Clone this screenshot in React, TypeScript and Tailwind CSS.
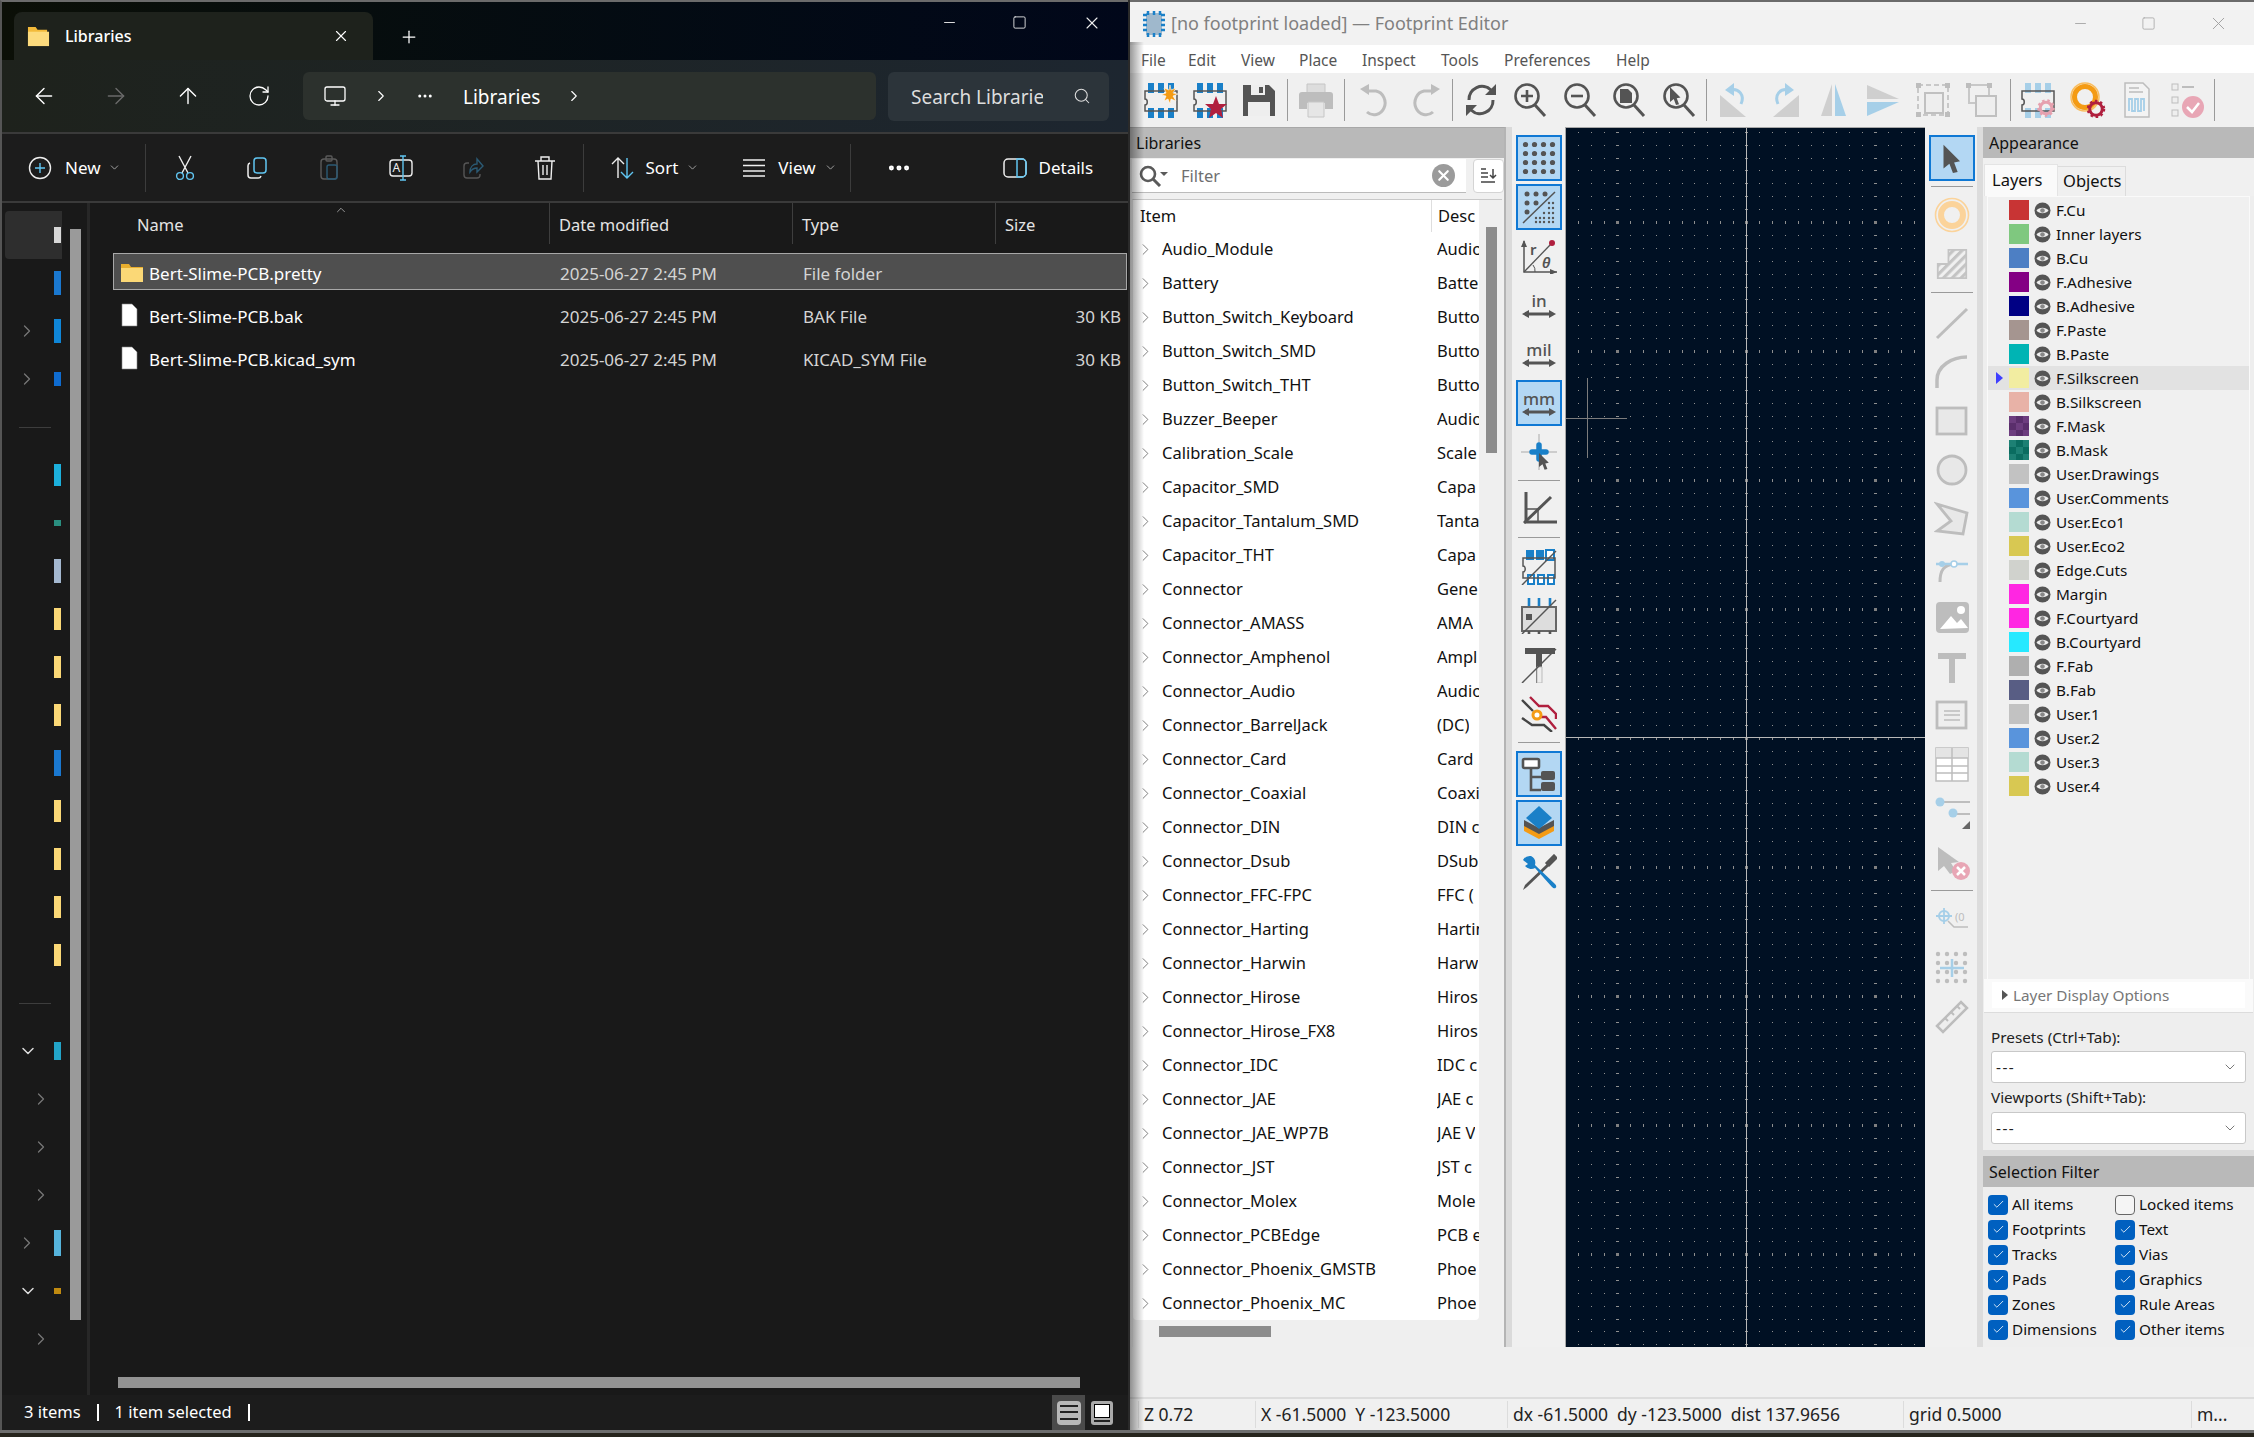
import React from "react";
import { ArrowLeft, ArrowRight, ArrowUp, RotateCw, Monitor, ChevronRight, ChevronDown, ChevronUp, Ellipsis, Search, X, Plus, Minus, Square, Check } from "lucide-react";

type P = { children?: React.ReactNode; s?: number };
const S = ({ children, s = 36 }: P) => (
  <svg width={s} height={s} viewBox="0 0 36 36" className="block shrink-0">{children}</svg>
);
const F = "Noto Sans, sans-serif";

/* ---------- Explorer ---------- */
const Folder = () => (
  <svg width="24" height="22" viewBox="0 0 24 22" className="block shrink-0">
    <path d="M1 3h8l2 3h12v14H1z" fill="#e9ae2e" />
    <path d="M1 7h22v14H1z" fill="#fbd876" />
  </svg>
);
const FileI = () => (
  <svg width="24" height="24" viewBox="0 0 24 24" className="block shrink-0 -ml-[3px]">
    <path d="M5 1h10l5 5v17H5z" fill="#fff" stroke="#888" strokeWidth="0.6" />
  </svg>
);
const B = "#60c5f1";
const CmdNew = () => (
  <svg width="24" height="24" viewBox="0 0 24 24" fill="none" strokeWidth="1.4"><circle cx="12" cy="12" r="10.5" stroke="#eee" /><path d="M12 7v10M7 12h10" stroke={B} /></svg>
);
const CmdCut = () => (
  <svg width="24" height="26" viewBox="0 0 24 26" fill="none" strokeWidth="1.4"><path d="M6 1l9 17M18 1L9 18" stroke="#eee" /><circle cx="7" cy="21" r="3.4" stroke={B} /><circle cx="17" cy="21" r="3.4" stroke={B} /></svg>
);
const CmdCopy = () => (
  <svg width="24" height="24" viewBox="0 0 24 24" fill="none" strokeWidth="1.5"><rect x="9" y="2" width="12" height="15" rx="3" stroke={B} /><path d="M5 7a3 3 0 0 0-2 3v9a3 3 0 0 0 3 3h7a3 3 0 0 0 3-2" stroke="#eee" /></svg>
);
const CmdPaste = () => (
  <svg width="24" height="26" viewBox="0 0 24 26" fill="none" strokeWidth="1.4"><rect x="4" y="4" width="16" height="20" rx="3" stroke="#5a5a5a" /><rect x="9" y="1" width="6" height="5" rx="1" stroke="#5a5a5a" /><rect x="10" y="10" width="10" height="14" rx="2" stroke="#2b5a74" /></svg>
);
const CmdRename = () => (
  <svg width="26" height="26" viewBox="0 0 26 26" fill="none" strokeWidth="1.4"><rect x="2" y="5" width="22" height="16" rx="3" stroke="#eee" /><path d="M15 1v24M12 1h6M12 25h6" stroke={B} /><text x="4.5" y="17" fontSize="12" fill="#eee" stroke="none" fontFamily={F}>A</text></svg>
);
const CmdShare = () => (
  <svg width="24" height="24" viewBox="0 0 24 24" fill="none" strokeWidth="1.4"><path d="M8 7H6a3 3 0 0 0-3 3v9a3 3 0 0 0 3 3h10a3 3 0 0 0 3-3v-1" stroke="#555" /><path d="M9 16c0-5 3-8 7-8V3l6 7-6 6v-4c-3 0-5 1-7 4z" stroke="#2b5a74" /></svg>
);
const CmdDel = () => (
  <svg width="24" height="26" viewBox="0 0 24 26" fill="none" stroke="#eee" strokeWidth="1.4"><path d="M2 6h20M8 6V2h8v4M5 6l1 18h12l1-18M10 10v10M14 10v10" /></svg>
);
const CmdSort = () => (
  <svg width="26" height="24" viewBox="0 0 26 24" fill="none" strokeWidth="1.4"><path d="M8 22V2M2 8l6-6 6 6" stroke="#eee" /><path d="M17 2v20M11 16l6 6 6-6" stroke={B} /></svg>
);
const CmdView = () => (
  <svg width="24" height="20" viewBox="0 0 24 20" fill="none" stroke="#eee" strokeWidth="1.5"><path d="M1 2h22M1 7.500h22M1 13h22M1 18h22" /></svg>
);
const CmdDetails = () => (
  <svg width="24" height="22" viewBox="0 0 24 22" fill="none" strokeWidth="1.5"><rect x="1" y="2" width="22" height="18" rx="4" stroke="#eee" /><path d="M14 2v18h5a4 4 0 0 0 4-4V6a4 4 0 0 0-4-4z" stroke={B} /></svg>
);

const CmdCell = ({ children, w }: { children: React.ReactNode; w: string }) => (
  <div className={`${w} h-full flex items-center justify-center shrink-0`}>{children}</div>
);
const CmdSep = () => <div className="w-px h-[48px] bg-[#3c3c3c] shrink-0" />;

type Nav = { ch?: "r" | "d"; lvl?: number; c?: string; h?: number; sep?: boolean; sel?: boolean };
const nav: Nav[] = [
  { c: "#d8d8d8", h: 16, sel: true }, { c: "#1a78d0", h: 24 }, { ch: "r", lvl: 1, c: "#0f86d8", h: 24 }, { ch: "r", lvl: 1, c: "#0f6cd0", h: 14 }, { sep: true },
  { c: "#1cb0dc", h: 22 }, { c: "#2a8f80", h: 6 }, { c: "#a4b8d0", h: 24 }, { c: "#fbd876", h: 22 }, { c: "#fbd876", h: 22 }, { c: "#fbd876", h: 22 }, { c: "#1a78d0", h: 26 }, { c: "#fbd876", h: 22 }, { c: "#fbd876", h: 22 }, { c: "#fbd876", h: 22 }, { c: "#fbd876", h: 22 }, { sep: true },
  { ch: "d", lvl: 1, c: "#22a4c8", h: 18 }, { ch: "r", lvl: 2 }, { ch: "r", lvl: 2 }, { ch: "r", lvl: 2 }, { ch: "r", lvl: 1, c: "#56b4dc", h: 26 }, { ch: "d", lvl: 1, c: "#c08a10", h: 6 }, { ch: "r", lvl: 2 },
];

function Sidebar() {
  return (
    <div className="w-[88px] shrink-0 flex border-r-[3px] border-[#272727] overflow-hidden">
      <div className="w-[60px] shrink-0 pt-[8px] pl-[3px]">
        {nav.map((n, i) =>
          n.sep ? (
            <div key={i} className="h-[48px] flex items-center pl-[14px]"><div className="w-[32px] h-px bg-[#3d3d3d]" /></div>
          ) : (
            <div key={i} className={`h-[48px] relative flex items-center justify-end ${n.sel ? "bg-[#2e2e2e] rounded-l-[4px]" : ""}`}>
              {n.ch === "r" && <ChevronRight size={20} strokeWidth={1.5} color="#777" className={`absolute top-[14px] ${n.lvl === 1 ? "left-[12px]" : "left-[26px]"}`} />}
              {n.ch === "d" && <ChevronDown size={20} strokeWidth={1.8} color="#ddd" className="absolute top-[14px] left-[13px]" />}
              {n.c && <div className="w-[7px] -translate-x-[1px]" style={{ height: n.h, background: n.c }} />}
            </div>
          )
        )}
      </div>
      <div className="w-[11px] ml-[8px] mt-[26px] h-[1091px] bg-[#9a9a9a] shrink-0" />
    </div>
  );
}

const files = [
  { n: "Bert-Slime-PCB.pretty", t: "File folder", s: "", d: true },
  { n: "Bert-Slime-PCB.bak", t: "BAK File", s: "30 KB" },
  { n: "Bert-Slime-PCB.kicad_sym", t: "KICAD_SYM File", s: "30 KB" },
];

function Explorer() {
  return (
    <div className="w-[1128px] shrink-0 h-full flex flex-col bg-[#191919] text-white border-l-2 border-t-2 border-l-[#555] border-t-[#6b6b6b] text-[17px]">
      <div className="h-[58px] shrink-0 flex bg-gradient-to-r from-[#0b0f07] to-[#01071a]">
        <div className="ml-[12px] mt-[10px] w-[359px] h-[48px] rounded-t-[8px] bg-[#1e221c] flex items-center pl-[13px] pr-[23px]">
          <svg width="23" height="23" viewBox="0 0 24 22" className="shrink-0"><path d="M1 1h8l2 3h10v17H1z" fill="#f3ba3a" /><path d="M1 6h22v15H1z" fill="#fcdb7d" /></svg>
          <span className="ml-[15px] text-[16px] font-medium flex-1">Libraries</span>
          <X size={18} strokeWidth={1.5} />
        </div>
        <Plus size={20} strokeWidth={1.5} className="ml-[26px] mt-[25px]" />
        <div className="ml-auto flex items-start mt-[11px] text-[#eee]">
          <Minus size={17} strokeWidth={1.3} className="mr-[54px] mt-[1px]" />
          <Square size={15} strokeWidth={1.4} className="mr-[55px] mt-[2px]" />
          <X size={20} strokeWidth={1.3} />
          <div className="w-[26px]" />
        </div>
      </div>
      <div className="h-[72px] shrink-0 flex items-center bg-gradient-to-r from-[#1e221c] to-[#1d2630] pl-[29px] text-[19px]">
        <ArrowLeft size={26} strokeWidth={1.3} className="mr-[46px]" />
        <ArrowRight size={26} strokeWidth={1.3} color="#6a6a6a" className="mr-[46px]" />
        <ArrowUp size={26} strokeWidth={1.3} className="mr-[46px]" />
        <RotateCw size={24} strokeWidth={1.3} className="mr-[32px]" />
        <div className="w-[573px] h-[48px] rounded-[6px] bg-[#2c312d] flex items-center pl-[20px] shrink-0">
          <Monitor size={24} strokeWidth={1.3} />
          <ChevronRight size={18} strokeWidth={1.5} className="ml-[25px]" />
          <Ellipsis size={18} strokeWidth={2} className="ml-[26px]" />
          <span className="ml-[29px] pt-[2px]">Libraries</span>
          <ChevronRight size={18} strokeWidth={1.5} className="ml-[25px]" />
        </div>
        <div className="ml-[12px] w-[221px] h-[49px] rounded-[6px] bg-[#2c343a] flex items-center pl-[23px] shrink-0 text-[#ddd]">
          <span className="w-[132px] overflow-hidden whitespace-nowrap pt-[2px]">Search Libraries</span>
          <Search size={18} strokeWidth={1.4} className="ml-[30px]" />
        </div>
      </div>
      <div className="h-[2px] shrink-0 bg-[#3a3a3a]" />
      <div className="h-[67px] shrink-0 flex items-center bg-[#1c1c1c] pl-[26px] text-[17px]">
        <CmdNew />
        <span className="ml-[13px]">New</span>
        <ChevronDown size={13} strokeWidth={1.5} className="ml-[7px] mr-[24px]" color="#bbb" />
        <CmdSep />
        <CmdCell w="w-[78px]"><CmdCut /></CmdCell>
        <CmdCell w="w-[66px]"><CmdCopy /></CmdCell>
        <CmdCell w="w-[78px]"><CmdPaste /></CmdCell>
        <CmdCell w="w-[66px]"><CmdRename /></CmdCell>
        <CmdCell w="w-[78px]"><CmdShare /></CmdCell>
        <CmdCell w="w-[66px]"><CmdDel /></CmdCell>
        <div className="w-[5px]" />
        <CmdSep />
        <div className="ml-[26px]"><CmdSort /></div>
        <span className="ml-[10px]">Sort</span>
        <ChevronDown size={13} strokeWidth={1.5} className="ml-[8px] mr-[43px]" color="#bbb" />
        <CmdView />
        <span className="ml-[12px]">View</span>
        <ChevronDown size={13} strokeWidth={1.5} className="ml-[8px] mr-[13px]" color="#bbb" />
        <CmdSep />
        <Ellipsis size={26} strokeWidth={2.6} className="ml-[35px] mr-[91px]" />
        <CmdDetails />
        <span className="ml-[12px]">Details</span>
      </div>
      <div className="h-[2px] shrink-0 bg-[#3a3a3a]" />
      <div className="flex-1 flex min-h-0">
        <Sidebar />
        <div className="flex-1 flex flex-col min-w-0 pl-[23px]">
          <div className="h-[41px] shrink-0 flex items-stretch text-[#e4e4e4] relative text-[16.5px]">
            <ChevronUp size={14} strokeWidth={1.3} color="#bbb" className="absolute left-[221px] top-[0px]" />
            <div className="w-[437px] pl-[24px] pt-[4px] flex items-center border-r border-[#3e3e3e]">Name</div>
            <div className="w-[243px] pl-[9px] pt-[4px] flex items-center border-r border-[#3e3e3e]">Date modified</div>
            <div className="w-[203px] pl-[9px] pt-[4px] flex items-center border-r border-[#3e3e3e]">Type</div>
            <div className="pl-[9px] pt-[4px] flex items-center">Size</div>
          </div>
          <div className="pt-[9px] pr-[1px] flex flex-col gap-[6px]">
            {files.map((f, i) => (
              <div key={f.n} className={`h-[37px] flex items-center border ${i === 0 ? "bg-[#4f4f4f] border-[#a8a8a8]" : "border-transparent"}`}>
                <div className="w-[35px] pl-[6px] shrink-0">{f.d ? <Folder /> : <FileI />}</div>
                <div className="w-[411px] shrink-0 whitespace-nowrap pt-[4px]">{f.n}</div>
                <div className="w-[243px] shrink-0 text-[#d4d4d4] pt-[4px]">2025-06-27 2:45 PM</div>
                <div className="w-[203px] shrink-0 text-[#d4d4d4] pt-[4px]">{f.t}</div>
                <div className="flex-1 text-right pr-[5px] text-[#d4d4d4] pt-[4px]">{f.s}</div>
              </div>
            ))}
          </div>
          <div className="mt-auto mb-[7px] ml-[5px] w-[962px] h-[11px] bg-[#939393] shrink-0" />
        </div>
      </div>
      <div className="h-[35px] shrink-0 flex items-center bg-[#1c1c1c] pl-[22px] text-[16.5px] relative">
        <span>3 items</span>
        <div className="w-[2px] h-[17px] bg-white ml-[16px] mr-[16px]" />
        <span>1 item selected</span>
        <div className="w-[2px] h-[17px] bg-white ml-[16px]" />
        <div className="ml-auto flex items-center h-full mr-[15px]">
          <div className="h-full w-[33px] bg-[#4a4a4a] flex items-center justify-center">
            <div className="w-[24px] h-[24px] rounded-[4px] bg-[#b8b8b8] flex flex-col justify-around py-[2px] px-[3px]">
              <div className="h-[2px] bg-[#222]" /><div className="h-[2px] bg-[#222]" /><div className="h-[2px] bg-[#222]" />
            </div>
          </div>
          <div className="ml-[6px] w-[22px] h-[24px] rounded-[3px] bg-[#aaa] p-[3px] flex flex-col gap-[2px]">
            <div className="flex-1 bg-white border border-black" /><div className="h-[2px] bg-[#222]" />
          </div>
        </div>
      </div>
    </div>
  );
}

/* ---------- KiCad icons ---------- */
const BL = "#1a80c8";
const DK = "#545454";
const LG = "#bdbdbd";
const LB = "#a6cfe8";
const Fp = ({ c = BL }: { c?: string }) => (
  <>
    <path d="M5 1h6v10H5zM15 1h6v10h-6zM25 1h6v10h-6zM5 26h6v10H5zM15 26h6v10h-6zM25 26h6v10h-6z" fill={c} />
    <path d="M2 9h32v20H2v-6c3 0 3-6 0-6z" fill="none" stroke="#555" strokeWidth="1.5" />
  </>
);
const Gear = ({ x, y, r, c }: { x: number; y: number; r: number; c: string }) => (
  <>
    <circle cx={x} cy={y} r={r} fill="none" stroke={c} strokeWidth="2.500" strokeDasharray="2.500 2.700" />
    <circle cx={x} cy={y} r={r - 1.7} fill="none" stroke={c} strokeWidth="3" />
  </>
);
const Mag = ({ children }: { children?: React.ReactNode }) => (
  <S>
    <circle cx="15" cy="14" r="11.500" fill="none" stroke={DK} strokeWidth="2.600" />
    <path d="M23 23l10 11" stroke={DK} strokeWidth="3" />
    {children}
  </S>
);
const Cursor = ({ c = DK, x = 0, y = 0, k = 1 }: { c?: string; x?: number; y?: number; k?: number }) => (
  <path transform={`translate(${x} ${y}) scale(${k})`} d="M0 0l14 14-5 1 3 8-4 1-3-8-5 4z" fill={c} />
);
const top: (React.ReactNode | number)[] = [
  <S key="a"><Fp /><path d="M27 3l1 5 5-2-3 5 5 1-5 2 3 5-5-2-1 5-2-5-4 2 2-5-5-1 5-2-2-5 5 2z" fill="#f49b14" stroke="#fff" strokeWidth="0.6" /></S>,
  <S key="b"><Fp /><path d="M24 14l3 8h8l-6 5 2 9-7-5-7 5 2-9-6-5h8z" fill="#b01f3e" /></S>,
  <S key="c"><path d="M2 3h26l6 6v25H2z" fill={DK} /><path d="M10 3h14v10H10z" fill="#eee" /><path d="M18 5h4v6h-4z" fill={DK} /><path d="M7 20h22v14H7z" fill="#eee" /></S>,
  3,
  <S key="d"><path d="M9 2h18v9H9z" fill="#ddd" stroke="#c6c6c6" /><path d="M1 13a3 3 0 0 1 3-3h28a3 3 0 0 1 3 3v14h-8v-6H9v6H1z" fill={LG} /><path d="M10 20h16v15H10z" fill="#e6e6e6" stroke="#c6c6c6" /></S>,
  5,
  <S key="e"><path d="M10 9h9a11 12 0 1 1-9 21" fill="none" stroke={LG} strokeWidth="3" /><path d="M3 7l9-5v11z" fill={LG} /></S>,
  <S key="f"><path d="M26 9h-9a11 12 0 1 0 9 21" fill="none" stroke={LG} strokeWidth="3" /><path d="M33 7l-9-5v11z" fill={LG} /></S>,
  3,
  <S key="g"><path d="M6 18A13 13 0 0 1 28 8M30 18A13 13 0 0 1 8 28" fill="none" stroke={DK} strokeWidth="3" /><path d="M33 2v11H22zM3 34V23h11z" fill={DK} /></S>,
  <Mag key="h"><path d="M15 8v12M9 14h12" stroke={DK} strokeWidth="2.600" /></Mag>,
  <Mag key="i"><path d="M9 14h12" stroke={DK} strokeWidth="2.600" /></Mag>,
  <Mag key="j"><path d="M9 7h8l4 4v10H9z" fill={DK} /></Mag>,
  <Mag key="k"><Cursor x={9} y={5} k={0.75} /></Mag>,
  3,
  <S key="l"><path d="M3 35V13l26 22z" fill="#cfcfcf" /><path d="M24 22c4-9-2-16-11-14" fill="none" stroke={LB} strokeWidth="3" /><path d="M17 1l-9 7 9 6z" fill={LB} /></S>,
  <S key="m"><path d="M33 35V13L7 35z" fill="#cfcfcf" /><path d="M12 22c-4-9 2-16 11-14" fill="none" stroke={LB} strokeWidth="3" /><path d="M19 1l9 7-9 6z" fill={LB} /></S>,
  <S key="n"><path d="M16 2v32H5z" fill="#cfcfcf" /><path d="M19 2v32h11z" fill={LB} /></S>,
  <S key="o"><path d="M2 3l32 14H2z" fill="#cfcfcf" /><path d="M2 20h32L2 34z" fill={LB} /></S>,
  <S key="p"><rect x="3" y="3" width="30" height="30" fill="none" stroke="#c8c8c8" strokeWidth="2" strokeDasharray="5 3" /><rect x="10" y="11" width="18" height="20" fill="#eee" stroke="#c0c0c0" strokeWidth="2" /><path d="M1 1h5v5H1zM30 1h5v5h-5zM1 30h5v5H1zM30 30h5v5h-5z" fill={LG} /></S>,
  <S key="q"><rect x="5" y="3" width="20" height="18" fill="none" stroke="#c8c8c8" strokeWidth="2" /><rect x="12" y="14" width="20" height="20" fill="#eee" stroke="#c0c0c0" strokeWidth="2" /><path d="M2 1h5v5H2zM23 1h5v5h-5z" fill={LG} /></S>,
  3,
  <S key="r"><Fp c={LB} /><Gear x={26} y={26} r={7.500} c="#e6a0ae" /></S>,
  <S key="s"><circle cx="15" cy="15" r="10.500" fill="none" stroke="#f49b14" strokeWidth="5" /><circle cx="15" cy="15" r="14" fill="none" stroke="#f9bd5e" strokeWidth="1.500" /><Gear x={26} y={27} r={8} c="#b01f3e" /></S>,
  <S key="t"><path d="M6 1h18l6 6v28H6z" fill="#f3f3f3" stroke={LG} strokeWidth="1.500" /><path d="M10 6h10M10 10h14" stroke={LG} strokeWidth="1.500" /><path d="M10 29v-12h3v12h3v-12h3v12h3v-12h3v12" fill="none" stroke={LB} strokeWidth="1.800" /></S>,
  <S key="u"><rect x="3" y="2" width="6" height="6" fill="#eee" stroke={LG} /><rect x="3" y="15" width="6" height="6" fill="#eee" stroke={LG} /><rect x="3" y="28" width="6" height="6" fill="#eee" stroke={LG} /><path d="M13 5h12" stroke={LG} strokeWidth="2" /><circle cx="24" cy="25" r="11" fill="#e8a6b5" /><path d="M18 25l5 5 7-9" fill="none" stroke="#fff" strokeWidth="2.500" /></S>,
  3,
];

const Toggle = ({ children }: { children: React.ReactNode }) => (
  <div className="w-[46px] h-[46px] bg-[#b3d7f3] border-2 border-[#0f78d4] flex items-center justify-center">{children}</div>
);
const Cell = ({ children }: { children?: React.ReactNode }) => (
  <div className="h-[49px] flex items-center justify-center shrink-0">{children}</div>
);
const VSep = ({ w = "w-[42px]", mb = "" }: { w?: string; mb?: string }) => (
  <div className={`h-[8px] flex items-center justify-center shrink-0 ${mb}`}><div className={`${w} h-px bg-[#9a9a9a]`} /></div>
);

const Dots = () => {
  const c = [6, 15, 24, 33];
  return <S>{c.flatMap((x) => c.map((y) => <circle key={x + "-" + y} cx={x - 1.5} cy={y - 1.5} r="2.600" fill={DK} />))}</S>;
};
const Unit = ({ t }: { t: string }) => (
  <S>
    <text x="18" y="20" textAnchor="middle" fontSize="17" fontFamily={F} fill={DK} fontWeight="500">{t}</text>
    <path d="M5 27h26" stroke={DK} strokeWidth="3" /><path d="M1 27l7-4v8zM35 27l-7-4v8z" fill={DK} />
  </S>
);

function LeftTools() {
  return (
    <div className="w-[53px] shrink-0 bg-[#f0f0f0] flex flex-col pt-[6px] pl-[1px]">
      <Cell><Toggle><Dots /></Toggle></Cell>
      <Cell><Toggle><S>{[[6, 5], [15, 5], [24, 5], [6, 14], [15, 14], [6, 23]].map(([x, y]) => <circle key={x + "." + y} cx={x} cy={y} r="2.500" fill={DK} />)}<path d="M2 34L34 3" stroke={DK} strokeWidth="1.500" />{[[28, 14], [32, 14], [28, 19], [32, 19], [23, 24], [28, 24], [32, 24], [15, 29], [19, 29], [23, 29], [28, 29], [32, 29], [15, 33], [19, 33], [23, 33], [28, 33], [32, 33]].map(([x, y]) => <circle key={x + "." + y} cx={x} cy={y} r="1.200" fill={DK} />)}</S></Toggle></Cell>
      <Cell><S><path d="M3 3v31h34" fill="none" stroke={DK} strokeWidth="1.500" /><path d="M0 9l3-7 3 7zM29 31l7 3-7 3z" fill={DK} /><path d="M3 34L30 6" stroke={DK} strokeWidth="1.300" /><circle cx="31" cy="5" r="3" fill="#b01f3e" /><text x="9" y="17" fontSize="15" fontFamily={F} fill={DK} fontWeight="600">r</text><text x="21" y="30" fontSize="15" fontFamily={F} fill={DK} fontWeight="600" fontStyle="italic">θ</text><path d="M12 27a9 9 0 0 1 2 7" fill="none" stroke={DK} /></S></Cell>
      <Cell><Unit t="in" /></Cell>
      <Cell><Unit t="mil" /></Cell>
      <Cell><Toggle><Unit t="mm" /></Toggle></Cell>
      <Cell><S><path d="M18 0v36M0 18h36" stroke="#aaa" /><path d="M18 11v14M11 18h14" stroke={BL} strokeWidth="5.500" strokeLinecap="round" /><Cursor x={18} y={19} k={0.7} /></S></Cell>
      <VSep />
      <Cell><S><path d="M5 1v30h31" fill="none" stroke={DK} strokeWidth="3" /><path d="M3 32L30 6" stroke={DK} strokeWidth="3" /><path d="M5 18h12v14" fill="none" stroke={DK} strokeWidth="1.500" /></S></Cell>
      <VSep mb="mb-[1px]" />
      <Cell><S><path d="M5 1h8v10H5zM15 1h8v10h-8z" fill={BL} /><path d="M25 1h8v10h-8z" fill="#fff" stroke={BL} strokeWidth="2" /><path d="M7 26h6v9H7zM17 26h6v9h-6zM27 26h6v9h-6z" fill="#fff" stroke={BL} strokeWidth="2" /><path d="M2 9h32v20H2v-6c3 0 3-6 0-6z" fill="none" stroke="#555" strokeWidth="1.500" /><path d="M1 36L35 2" stroke="#555" strokeWidth="1.500" /></S></Cell>
      <Cell><S><path d="M8 0v9M18 0v9M29 0v9" stroke={BL} strokeWidth="2.600" /><path d="M1 9h34v24H1z" fill="#ddd" stroke="#666" strokeWidth="2" /><path d="M8 33v4M18 33v4M29 33v4" stroke="#555" strokeWidth="2.600" /><path d="M5 16h6v6H5z" fill="#555" /><path d="M1 36L35 2" stroke="#555" strokeWidth="1.500" /></S></Cell>
      <Cell><S><path d="M4 1h30v6H21v29h-6V7H4z" fill={DK} /><path d="M16 20h5v16h-5z" fill="#eee" stroke="#bbb" /><path d="M1 36L35 2" stroke="#555" strokeWidth="1.500" /></S></Cell>
      <Cell><S><path d="M9 1l9 9h9l8 8v5M19 21l6 0 10 12" fill="none" stroke="#b01f3e" strokeWidth="2.400" /><path d="M1 4l11 11M1 22l10 7h12l8 7" fill="none" stroke="#444" strokeWidth="2.400" /><circle cx="16" cy="19" r="4" fill="#fff" stroke="#f49b14" strokeWidth="3" /></S></Cell>
      <VSep w="w-[42px]" mb="mb-[3px]" />
      <Cell><Toggle><S><rect x="2" y="3" width="16" height="9" rx="1.500" fill="#fff" stroke={DK} strokeWidth="2.600" /><path d="M10 12v22h10M10 21h10" fill="none" stroke={DK} strokeWidth="2.600" /><rect x="20" y="15" width="14" height="9" rx="2" fill={DK} /><rect x="20" y="26" width="14" height="9" rx="2" fill={DK} /></S></Toggle></Cell>
      <Cell><Toggle><S><path d="M18 26L3 18v8l15 8 15-8v-8z" fill="#f49b14" /><path d="M18 23L3 15v6l15 8 15-8v-6z" fill={DK} /><path d="M18 1L5 13l13 11 13-11z" fill={BL} /></S></Toggle></Cell>
      <Cell><S><path d="M2 36l2-5L27 9l2 2L6 33z" fill={DK} /><path d="M26 9l7-7 2 2-7 7z" fill={DK} strokeWidth="3" stroke={DK} /><path d="M10 2a8 8 0 0 0-8 4l5 4-3 2a8 8 0 0 0 10 2l17 19c3 3 6 0 3-3L14 11a8 8 0 0 0-4-9z" fill={BL} /></S></Cell>
    </div>
  );
}

const RightTools = () => (
  <div className="w-[52px] shrink-0 bg-[#f0f0f0] flex flex-col pt-[6px] pl-[1px]">
    <Cell><Toggle><svg width="34" height="34" viewBox="0 0 36 36"><Cursor x={9} y={4} k={1.250} /></svg></Toggle></Cell>
    <VSep />
    <Cell><S><circle cx="18" cy="18" r="11" fill="none" stroke="#fbd39a" strokeWidth="6" /><circle cx="18" cy="18" r="16.500" fill="none" stroke="#fbd39a" strokeWidth="1.600" /></S></Cell>
    <Cell><svg width="32" height="32" viewBox="0 0 36 36"><defs><pattern id="h" width="7" height="7" patternUnits="userSpaceOnUse" patternTransform="rotate(45)"><rect width="3.500" height="7" fill="#c4c4c4" /></pattern></defs><path d="M14 2h20v32H2V18h12z" fill="url(#h)" stroke="#c4c4c4" strokeWidth="2" /></svg></Cell>
    <VSep />
    <div className="h-[2px] shrink-0" />
    <Cell><S><path d="M3 33L33 4" stroke={LG} strokeWidth="3" /></S></Cell>
    <Cell><S><path d="M3 34v-8C3 12 18 3 33 3" fill="none" stroke={LG} strokeWidth="3.500" /></S></Cell>
    <Cell><S><rect x="3" y="5" width="29" height="26" fill="#e8e8e8" stroke={LG} strokeWidth="2.800" /></S></Cell>
    <Cell><S><circle cx="18" cy="18" r="14" fill="#e8e8e8" stroke={LG} strokeWidth="2.800" /></S></Cell>
    <Cell><S><path d="M3 3l30 9-4 21-26-3 14-10z" fill="#e8e8e8" stroke={LG} strokeWidth="2.800" /></S></Cell>
    <Cell><S><path d="M6 32c0-12 4-17 14-18" fill="none" stroke={LG} strokeWidth="3" /><path d="M2 14h32" stroke={LB} strokeWidth="2.500" /><circle cx="8" cy="14" r="3" fill={LB} /><circle cx="20" cy="14" r="3" fill="#fff" stroke={LB} strokeWidth="1.500" /></S></Cell>
    <Cell><S><rect x="2" y="3" width="33" height="31" rx="4" fill={LG} /><path d="M6 30l11-13 6 7 4-4 7 9z" fill="#fff" /><circle cx="27" cy="11" r="4" fill="#fff" /></S></Cell>
    <Cell><S><path d="M4 5h28v6H21v24h-6V11H4z" fill={LG} /></S></Cell>
    <Cell><S><rect x="3" y="5" width="29" height="26" fill="#eee" stroke={LG} strokeWidth="2.800" /><path d="M10 14h16M10 18h16M10 23h16" stroke={LG} strokeWidth="1.500" /></S></Cell>
    <Cell><S><rect x="2" y="2" width="32" height="33" fill="#fff" stroke={LG} strokeWidth="1.500" /><path d="M2 2h32v10H2z" fill="#e4e4e4" /><path d="M2 12h32M2 20h32M2 27h32M18 2v33" stroke={LG} strokeWidth="1.500" /></S></Cell>
    <Cell><S><path d="M9 7h27M22 19h14" stroke={LG} strokeWidth="2" /><circle cx="6" cy="7" r="4.500" fill={LB} /><circle cx="19" cy="18" r="4.500" fill={LB} /><path d="M28 34l8-8v8z" fill="#666" /></S></Cell>
    <Cell><S><path d="M4 3v24l6-5 6 8 6-3-5-8 8-1z" fill={LG} /><circle cx="27" cy="27" r="9" fill="#e8a6b5" /><path d="M23 23l8 8M31 23l-8 8" stroke="#fff" strokeWidth="2.500" /></S></Cell>
    <VSep />
    <Cell><S><circle cx="10" cy="15" r="5" fill="none" stroke={LB} strokeWidth="2" /><path d="M2 15h16M10 7v16" stroke={LB} strokeWidth="1.800" /><path d="M14 20l6 6h14" fill="none" stroke={LG} strokeWidth="1.500" /><text x="21" y="20" fontSize="11" fontFamily={F} fill={LG}>(0</text></S></Cell>
    <Cell><S><g fill={LG}>{[4, 13, 22, 31].flatMap((x) => [4, 13, 22, 31].map((y) => <circle key={x + ":" + y} cx={x} cy={y} r="2.200" />))}</g><path d="M18 9v18M6 18h24" stroke={LB} strokeWidth="2.500" /></S></Cell>
    <Cell><S><path d="M3 27L27 3l6 6L9 33z" fill="#eee" stroke={LG} strokeWidth="2.500" /><path d="M11 19l3 3M17 13l3 3M23 7l3 3" stroke={LG} strokeWidth="2" /></S></Cell>
  </div>
);

/* ---------- Canvas ---------- */
function Canvas() {
  const rects: React.ReactNode[] = [];
  for (let r = -7; r <= 87; r++) {
    for (let c = -4; c <= 24; c++) {
      const x = Math.round(51 + c * 12.9);
      const y = Math.round(94 + r * 12.9);
      const mc = ((c % 10) + 10) % 10 === 0;
      const mr = ((r % 10) + 10) % 10 === 0;
      if (x < 0 || y < 0) continue;
      rects.push(
        <rect key={r + "," + c} x={mc ? x - 1 : x} y={mr ? y - 1 : y} width={mc ? 3 : 1} height={mr ? 3 : 1} fill={mc && mr ? "#808080" : "#8f8f8f"} />
      );
    }
  }
  return (
    <div className="w-[360px] shrink-0 border-l border-t border-[#a8a8a8] bg-[#001023] overflow-hidden">
      <svg width="359" height="1219" shapeRendering="crispEdges" className="block">
        {rects}
        <path d="M180.500 0V1219M0 609.500H359" stroke="#b8b8b8" strokeWidth="1" />
        <path d="M0 290.500H61M21.500 250V330" stroke="#7c7c7c" strokeWidth="1" />
      </svg>
    </div>
  );
}

/* ---------- Panels ---------- */
const libs: [string, string][] = [
  ["Audio_Module", "Audio"], ["Battery", "Batte"], ["Button_Switch_Keyboard", "Butto"], ["Button_Switch_SMD", "Butto"], ["Button_Switch_THT", "Butto"], ["Buzzer_Beeper", "Audio"], ["Calibration_Scale", "Scale"], ["Capacitor_SMD", "Capa"], ["Capacitor_Tantalum_SMD", "Tanta"], ["Capacitor_THT", "Capa"], ["Connector", "Gene"], ["Connector_AMASS", "AMA"], ["Connector_Amphenol", "Ampl"], ["Connector_Audio", "Audio"], ["Connector_BarrelJack", "(DC) "], ["Connector_Card", "Card"], ["Connector_Coaxial", "Coaxi"], ["Connector_DIN", "DIN c"], ["Connector_Dsub", "DSub"], ["Connector_FFC-FPC", "FFC ("], ["Connector_Harting", "Hartin"], ["Connector_Harwin", "Harw"], ["Connector_Hirose", "Hiros"], ["Connector_Hirose_FX8", "Hiros"], ["Connector_IDC", "IDC c"], ["Connector_JAE", "JAE c"], ["Connector_JAE_WP7B", "JAE V"], ["Connector_JST", "JST c"], ["Connector_Molex", "Mole"], ["Connector_PCBEdge", "PCB e"], ["Connector_Phoenix_GMSTB", "Phoe"], ["Connector_Phoenix_MC", "Phoe"],
];

function LibPanel() {
  return (
    <div className="w-[376px] shrink-0 flex flex-col border-r-2 border-[#b4b4b4] border-t border-t-[#a8a8a8]">
      <div className="h-[30px] shrink-0 bg-[#b9b9b9] pl-[6px] flex items-center text-[16px] text-[#111]">Libraries</div>
      <div className="h-[34px] mt-[1px] shrink-0 flex items-stretch pl-[2px]">
        <div className="w-[334px] shrink-0 bg-white border-b border-[#bbb] flex items-center relative">
          <svg width="30" height="22" viewBox="0 0 30 22" className="ml-[7px] shrink-0"><circle cx="9" cy="9" r="7" fill="none" stroke="#5a5a5a" strokeWidth="2.600" /><path d="M14 14l7 7" stroke="#5a5a5a" strokeWidth="3" /><path d="M21 7h8l-4 4z" fill="#5a5a5a" /></svg>
          <span className="ml-[12px] pt-[2px] text-[16.5px] text-[#6f6f6f]">Filter</span>
          <div className="absolute right-[11px] top-[5px] w-[23px] h-[23px] rounded-full bg-[#9b9b9b] flex items-center justify-center"><X size={17} color="#fff" strokeWidth={3} /></div>
        </div>
        <div className="ml-[7px] w-[31px] shrink-0 bg-white border border-[#d4d4d4] rounded-[4px] flex items-center justify-center">
          <svg width="18" height="18" viewBox="0 0 18 18" fill="none" stroke="#444" strokeWidth="1.500"><path d="M1 2h5M1 6h7M1 10h7M1 15h14M13 2v9M10 8l3 3 3-3" /></svg>
        </div>
      </div>
      <div className="flex-1 mt-[6px] mx-[2px] mb-0 border-t border-[#c8c8c8] border-l border-l-[#e8e8e8] bg-[#efefef] relative flex flex-col min-h-0">
        <div className="flex flex-1 min-h-0">
          <div className="w-[346px] shrink-0 h-[1120px] bg-white overflow-hidden rounded-b-[4px] text-[16.5px] text-[#111]">
            <div className="h-[32px] flex items-center">
              <div className="w-[299px] h-full pl-[7px] flex items-center border-r border-[#dedede]">Item</div>
              <div className="pl-[6px] overflow-hidden whitespace-nowrap">Desc</div>
            </div>
            {libs.map(([a, b]) => (
              <div key={a} className="h-[34px] flex items-center whitespace-nowrap">
                <ChevronRight size={19} strokeWidth={1.2} color="#777" className="ml-[3px] shrink-0" />
                <div className="w-[275px] ml-[7px] shrink-0">{a}</div>
                <div className="overflow-hidden">{b}</div>
              </div>
            ))}
          </div>
          <div className="flex-1 pl-[7px] pt-[27px]"><div className="w-[11px] h-[226px] bg-[#8c8c8c]" /></div>
        </div>
        <div className="h-[27px] shrink-0 pl-[26px] pt-[6px]"><div className="w-[112px] h-[11px] bg-[#8c8c8c]" /></div>
      </div>
    </div>
  );
}

const layers: [string, string, string?][] = [
  ["F.Cu", "#c83434"], ["Inner layers", "#7fc87f"], ["B.Cu", "#4d7fc4"], ["F.Adhesive", "#840084"], ["B.Adhesive", "#000084"], ["F.Paste", "#a59590"], ["B.Paste", "#00b4b4"], ["F.Silkscreen", "#f2eda1"], ["B.Silkscreen", "#e8b2a7"], ["F.Mask", "#5a2e6c", "#6d3d7f"], ["B.Mask", "#0a6c60", "#1d8074"], ["User.Drawings", "#c2c2c2"], ["User.Comments", "#5994dc"], ["User.Eco1", "#b4dbd2"], ["User.Eco2", "#d8c852"], ["Edge.Cuts", "#d0d2cd"], ["Margin", "#ff26e2"], ["F.Courtyard", "#ff26e2"], ["B.Courtyard", "#26e9ff"], ["F.Fab", "#afafaf"], ["B.Fab", "#585d84"], ["User.1", "#c2c2c2"], ["User.2", "#5994dc"], ["User.3", "#b4dbd2"], ["User.4", "#d8c852"],
];
const Eye = () => (
  <svg width="17" height="17" viewBox="0 0 17 17" className="block shrink-0">
    <circle cx="8.500" cy="8.500" r="8" fill="#555" />
    <path d="M2.500 8.500C5 4.800 12 4.800 14.500 8.500 12 12.200 5 12.200 2.500 8.500z" fill="#eee" />
    <circle cx="8.500" cy="8.500" r="2.300" fill="#888" />
  </svg>
);
const Cb = ({ label, on = true }: { label: string; on?: boolean }) => (
  <div className="h-[25px] flex items-center">
    <div className={`w-[20px] h-[20px] rounded-[4px] shrink-0 flex items-center justify-center ${on ? "bg-[#0060c0]" : "bg-[#f5f5f5] border border-[#666]"}`}>
      {on && <Check size={13} color="#fff" strokeWidth={1.5} />}
    </div>
    <span className="ml-[4px] whitespace-nowrap">{label}</span>
  </div>
);
const Combo = () => (
  <div className="mx-[8px] h-[32px] bg-white border border-[#c8c8c8] rounded-[3px] flex items-center pl-[4px] pr-[7px] justify-between">
    <span className="text-[#222] tracking-[1.5px]">---</span>
    <ChevronDown size={16} strokeWidth={1.2} color="#555" />
  </div>
);

function Appearance() {
  const col1 = ["All items", "Footprints", "Tracks", "Pads", "Zones", "Dimensions"];
  const col2: [string, boolean][] = [["Locked items", false], ["Text", true], ["Vias", true], ["Graphics", true], ["Rule Areas", true], ["Other items", true]];
  return (
    <div className="flex-1 min-w-0 flex flex-col text-[15.3px] text-[#111] bg-[#eeeeee]">
      <div className="h-[31px] shrink-0 bg-[#b9b9b9] pl-[6px] flex items-center text-[16px]">Appearance</div>
      <div className="h-[38px] shrink-0 flex items-end pl-[1px] bg-[#f0f0f0] text-[16.5px]">
        <div className="w-[74px] h-[32px] bg-[#fafafa] border border-[#e4e4e4] border-b-0 flex items-center pl-[7px]">Layers</div>
        <div className="w-[68px] h-[30px] bg-[#f0f0f0] border border-[#dcdcdc] border-l-0 border-b-0 flex items-center pl-[5px]">Objects</div>
      </div>
      <div className="h-[783px] shrink-0 mx-[4px] border-l border-t border-r border-[#fafafa] pt-[1px] bg-[#f0f0f0]">
        {layers.map(([n, c, c2], i) => (
          <div key={n} className={`h-[24px] flex items-center ${i === 7 ? "bg-[#e2e2e2]" : ""}`}>
            <div className="w-[21px] shrink-0 pl-[8px]">{i === 7 && <div className="w-0 h-0 border-y-[6px] border-y-transparent border-l-[7px] border-l-[#3f3fff]" />}</div>
            <div className="w-[20px] h-[20px] shrink-0" style={c2 ? { background: `repeating-conic-gradient(${c} 0 25%, ${c2} 0 50%) 0 0 / 14px 14px` } : { background: c }} />
            <div className="ml-[5px]"><Eye /></div>
            <span className="ml-[5px] whitespace-nowrap">{n}</span>
          </div>
        ))}
      </div>
      <div className="h-[34px] shrink-0 mx-[1px] bg-[#fafafa] border-b border-[#dcdcdc] px-[8px] pt-[3px]">
        <div className="h-[26px] flex items-center pl-[10px] bg-white text-[#777]">
          <div className="w-0 h-0 border-y-[5px] border-y-transparent border-l-[6px] border-l-[#555] mr-[5px]" />
          Layer Display Options
        </div>
      </div>
      <div className="h-[137px] shrink-0 flex flex-col bg-[#eeeeee] pt-[11px]">
        <div className="h-[27px] pl-[8px] flex items-center text-[#222]">Presets (Ctrl+Tab):</div>
        <Combo />
        <div className="h-[29px] pl-[8px] flex items-center text-[#222]">Viewports (Shift+Tab):</div>
        <Combo />
      </div>
      <div className="h-[6px] shrink-0 bg-[#dcdcdc]" />
      <div className="h-[31px] shrink-0 bg-[#b9b9b9] pl-[6px] flex items-center text-[16px]">Selection Filter</div>
      <div className="flex pl-[5px] pt-[5px]">
        <div className="w-[127px] shrink-0">{col1.map((l) => <Cb key={l} label={l} />)}</div>
        <div>{col2.map(([l, on]) => <Cb key={l} label={l} on={on} />)}</div>
      </div>
    </div>
  );
}

function KiCad() {
  return (
    <div className="flex-1 min-w-0 h-full relative flex flex-col bg-[#f0f0f0] border-t-2 border-[#6b6b6b] text-[#111]">
      <div className="h-[43px] shrink-0 flex items-center bg-[#f2f2f2] pl-[13px] text-[18px] text-[#808080] relative">
        <svg width="22" height="26" viewBox="0 0 22 26" className="shrink-0"><path d="M3 2h16v22H3z" fill="#9fb8cc" /><path d="M0 4h4M0 9h4M0 14h4M0 19h4M18 4h4M18 9h4M18 14h4M18 19h4M5 0v4M11 0v4M17 0v4M5 22v4M11 22v4M17 22v4" stroke={BL} strokeWidth="2.500" /></svg>
        <span className="ml-[6px]">[no footprint loaded] — Footprint Editor</span>
        <div className="ml-auto flex items-center text-[#a0a0a0]">
          <Minus size={17} strokeWidth={1.2} />
          <Square size={15} strokeWidth={1.2} className="ml-[52px]" />
          <X size={21} strokeWidth={1.1} className="ml-[52px] mr-[25px]" />
        </div>
      </div>
      <div className="h-[28px] shrink-0 bg-white flex items-center pl-[11px] pt-[3px] text-[15.500px] text-[#555]">
        {[["File", "w-[47px]"], ["Edit", "w-[53px]"], ["View", "w-[58px]"], ["Place", "w-[63px]"], ["Inspect", "w-[79px]"], ["Tools", "w-[63px]"], ["Preferences", "w-[112px]"], ["Help", "w-[50px]"]].map(([t, w]) => (
          <div key={t} className={w}>{t}</div>
        ))}
      </div>
      <div className="h-[54px] shrink-0 flex items-center pl-[6px]">
        {top.map((t, i) =>
          typeof t === "number" ? (
            <div key={i} className={`w-px h-[42px] bg-[#9a9a9a] shrink-0 ${t === 5 ? "ml-[3px] mr-[6px]" : "mx-[3px]"}`} />
          ) : (
            <div key={i} className="w-[49.4px] flex items-center justify-center shrink-0">{t}</div>
          )
        )}
      </div>
      <div className="h-[1220px] shrink-0 flex">
        <LibPanel />
        <div className="w-[6px] shrink-0 bg-[#dadada]" />
        <LeftTools />
        <Canvas />
        <RightTools />
        <div className="w-[6px] shrink-0 bg-[#dcdcdc]" />
        <Appearance />
      </div>
      <div className="h-[50px] shrink-0 bg-[#efefef]" />
      <div className="flex-1 border-t-2 border-[#dcdcdc] flex items-stretch text-[17.5px] py-[2px] text-[#222]">
        {[["w-[9px]", ""], ["w-[117px]", "Z 0.72"], ["w-[252px]", "X -61.5000  Y -123.5000"], ["w-[396px]", "dx -61.5000  dy -123.5000  dist 137.9656"], ["w-[288px]", "grid 0.5000"], ["", "m..."]].map(([w, t], i) => (
          <div key={i} className={`${w} ${i === 5 ? "flex-1" : "border-r border-[#dcdcdc]"} pl-[5px] flex items-center whitespace-pre shrink-0`}>{t}</div>
        ))}
      </div>
      <div className="absolute left-0 top-[40px] bottom-0 w-[14px] bg-gradient-to-r from-[#00000066] to-transparent pointer-events-none" />
    </div>
  );
}

export default function App() {
  return (
    <div className="w-[2254px] h-[1437px] flex flex-col overflow-hidden bg-[#1c1c1c] [font-family:'Noto_Sans',sans-serif]">
      <div className="h-[1430px] shrink-0 flex">
        <Explorer />
        <div className="w-[2px] shrink-0 bg-[#2a2a2a]" />
        <KiCad />
      </div>
      <div className="h-[3px] shrink-0 bg-[#6e6e6e]" />
      <div className="flex-1 bg-[#26241c]" />
    </div>
  );
}
